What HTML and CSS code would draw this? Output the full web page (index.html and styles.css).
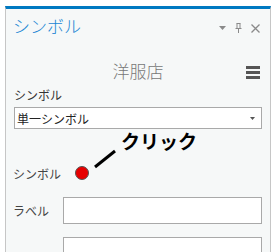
FILE: index.html
```html
<!DOCTYPE html>
<html lang="ja">
<head>
  <meta charset="UTF-8">
  <title>シンボル</title>
  <link rel="stylesheet" href="styles.css">
</head>
<body>
<div class="pane">
  <div class="pane-head">
    <span class="pane-title">シンボル</span>
    <div class="pane-tools">
      <svg width="7" height="4" viewBox="0 0 7 4"><path d="M0 0h7L3.5 4z" fill="#8a8a8a"/></svg>
      <svg width="7" height="10" viewBox="0 0 7 10"><path d="M1.5 0.5h4M2 0.5v5M5 0.5v5M0.5 5.5h6M3.5 5.5v4.5" stroke="#8a8a8a" stroke-width="1" fill="none"/></svg>
      <svg width="9" height="9" viewBox="0 0 9 9"><path d="M0.5 0.5l8 8M8.5 0.5l-8 8" stroke="#8a8a8a" stroke-width="1.3"/></svg>
    </div>
  </div>

  <div class="layer-row">
    <span class="layer-name">洋服店</span>
    <span class="menu-btn"><i></i><i></i><i></i></span>
  </div>

  <div class="field">
    <div class="field-label">シンボル</div>
    <div class="select">
      <span>単一シンボル</span>
      <svg width="5" height="3" viewBox="0 0 5 3"><path d="M0 0h5L2.5 3z" fill="#555"/></svg>
    </div>
  </div>

  <div class="sym-row">
    <span class="row-label">シンボル</span>
    <span class="dot"></span>
    <span class="note">
      <svg class="note-line" width="24" height="20" viewBox="0 0 24 20"><path d="M2 18L22 2" stroke="#000" stroke-width="3"/></svg>
      <span class="note-text">クリック</span>
    </span>
  </div>

  <div class="in-row">
    <span class="row-label">ラベル</span>
    <div class="box"></div>
  </div>
  <div class="in-row">
    <span class="row-label"></span>
    <div class="box"></div>
  </div>
</div>
</body>
</html>
```

FILE: styles.css
```css
html, body {
  height: 252px;
  overflow: hidden;
}

body {
  margin: 0;
  background: #fff;
  font-family: "Noto Sans CJK JP", "Noto Sans", sans-serif;
}

.pane {
  margin: 6px 0 0 5px;
  width: 264px;
  height: 246px;
  background: #f6f8f8;
  border-top: 3px solid #0079c1;
  border-left: 1px solid #c6c6c6;
  border-right: 1px solid #c6c6c6;
}

.pane-head {
  display: flex;
  align-items: center;
  justify-content: space-between;
  padding: 2px 10px 0 7px;
  height: 28px;
}

.pane-title {
  font-size: 17px;
  font-weight: 300;
  color: #1a86d4;
}

.pane-tools {
  display: flex;
  align-items: center;
  gap: 9px;
  padding-top: 6px;
}

.layer-row {
  position: relative;
  display: flex;
  justify-content: center;
  margin-top: 21px;
  height: 25px;
}

.layer-name {
  font-size: 17px;
  font-weight: 300;
  color: #777;
  line-height: 22px;
}

.menu-btn {
  position: absolute;
  right: 10px;
  top: 6px;
  display: flex;
  flex-direction: column;
  gap: 2px;
}

.menu-btn i {
  display: block;
  width: 14px;
  height: 3px;
  background: #555;
}

.field {
  padding: 0 8px;
  margin-top: 2px;
}

.field-label {
  font-size: 12px;
  color: #333;
  line-height: 16px;
}

.select {
  display: flex;
  align-items: center;
  justify-content: space-between;
  margin-top: 4px;
  height: 20px;
  background: #fff;
  border: 1px solid #a9a9a9;
  padding: 0 6px 0 2px;
  font-size: 12px;
  color: #222;
}

.sym-row {
  display: flex;
  align-items: center;
  padding-left: 7px;
  margin-top: 36px;
  height: 16px;
}

.row-label {
  width: 50px;
  flex: none;
  font-size: 12px;
  color: #444;
}

.dot {
  width: 12px;
  height: 12px;
  border-radius: 50%;
  background: #e60000;
  border: 1px solid #555;
  margin-left: 12px;
}

.note {
  position: relative;
  align-self: flex-start;
}

.note-line {
  position: absolute;
  left: 4px;
  top: -16px;
}

.note-text {
  position: absolute;
  left: 32px;
  top: -38px;
  font-size: 19px;
  font-weight: bold;
  color: #000;
  white-space: nowrap;
}

.in-row {
  display: flex;
  align-items: center;
  padding: 0 8px 0 7px;
  margin-top: 16px;
}

.in-row + .in-row {
  margin-top: 13px;
}

.box {
  flex: 1;
  height: 25px;
  background: #fff;
  border: 1px solid #a9a9a9;
}
```
